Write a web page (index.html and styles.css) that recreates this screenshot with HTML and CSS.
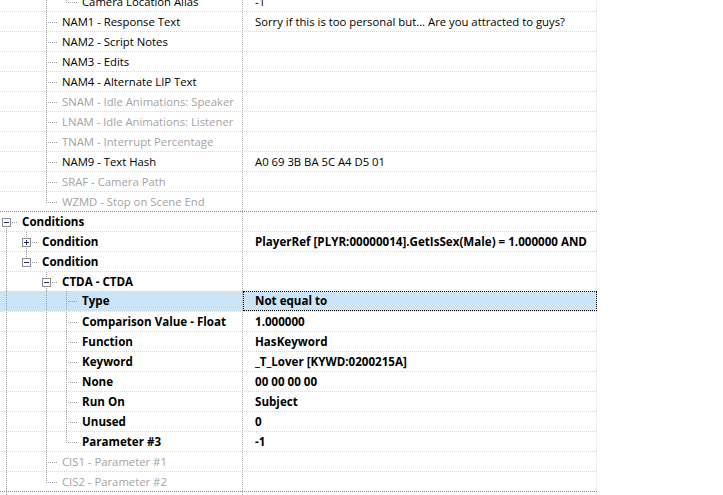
FILE: index.html
```html
<!DOCTYPE html>
<html>
<head>
<meta charset="utf-8">
<link rel="stylesheet" href="styles.css">
</head>
<body>
<div class="tree">
  <div class="row">
    <div class="name"><span class="g"></span><span class="g"></span><span class="g v"></span><span class="own ell"></span><span class="lbl">Camera Location Alias</span></div>
    <div class="val">-1</div>
  </div>
  <div class="row">
    <div class="name"><span class="g"></span><span class="g"></span><span class="own tee"></span><span class="lbl">NAM1 - Response Text</span></div>
    <div class="val">Sorry if this is too personal but... Are you attracted to guys?</div>
  </div>
  <div class="row">
    <div class="name"><span class="g"></span><span class="g"></span><span class="own tee"></span><span class="lbl">NAM2 - Script Notes</span></div>
    <div class="val"></div>
  </div>
  <div class="row">
    <div class="name"><span class="g"></span><span class="g"></span><span class="own tee"></span><span class="lbl">NAM3 - Edits</span></div>
    <div class="val"></div>
  </div>
  <div class="row">
    <div class="name"><span class="g"></span><span class="g"></span><span class="own tee"></span><span class="lbl">NAM4 - Alternate LIP Text</span></div>
    <div class="val"></div>
  </div>
  <div class="row off">
    <div class="name"><span class="g"></span><span class="g"></span><span class="own tee"></span><span class="lbl">SNAM - Idle Animations: Speaker</span></div>
    <div class="val"></div>
  </div>
  <div class="row off">
    <div class="name"><span class="g"></span><span class="g"></span><span class="own tee"></span><span class="lbl">LNAM - Idle Animations: Listener</span></div>
    <div class="val"></div>
  </div>
  <div class="row off">
    <div class="name"><span class="g"></span><span class="g"></span><span class="own tee"></span><span class="lbl">TNAM - Interrupt Percentage</span></div>
    <div class="val"></div>
  </div>
  <div class="row">
    <div class="name"><span class="g"></span><span class="g"></span><span class="own tee"></span><span class="lbl">NAM9 - Text Hash</span></div>
    <div class="val">A0 69 3B BA 5C A4 D5 01</div>
  </div>
  <div class="row off">
    <div class="name"><span class="g"></span><span class="g"></span><span class="own tee"></span><span class="lbl">SRAF - Camera Path</span></div>
    <div class="val"></div>
  </div>
  <div class="row off dark">
    <div class="name"><span class="g"></span><span class="g"></span><span class="own ell"></span><span class="lbl">WZMD - Stop on Scene End</span></div>
    <div class="val"></div>
  </div>

  <div class="row b">
    <div class="name"><span class="own box bot"><svg class="bx" width="9" height="9" viewBox="0 0 9 9"><rect x="0.5" y="0.5" width="8" height="8" fill="#fff" stroke="#8e8e8e"/><path d="M2 4.5H7" stroke="#1d2f6b"/></svg></span><span class="lbl">Conditions</span></div>
    <div class="val"></div>
  </div>
  <div class="row b">
    <div class="name"><span class="g v"></span><span class="own box tee"><svg class="bx" width="9" height="9" viewBox="0 0 9 9"><rect x="0.5" y="0.5" width="8" height="8" fill="#fff" stroke="#8e8e8e"/><path d="M2 4.5H7M4.5 2V7" stroke="#1d2f6b"/></svg></span><span class="lbl">Condition</span></div>
    <div class="val">PlayerRef [PLYR:00000014].GetIsSex(Male) = 1.000000 AND</div>
  </div>
  <div class="row b">
    <div class="name"><span class="g v"></span><span class="own box ell"><svg class="bx" width="9" height="9" viewBox="0 0 9 9"><rect x="0.5" y="0.5" width="8" height="8" fill="#fff" stroke="#8e8e8e"/><path d="M2 4.5H7" stroke="#1d2f6b"/></svg></span><span class="lbl">Condition</span></div>
    <div class="val"></div>
  </div>
  <div class="row b">
    <div class="name"><span class="g v"></span><span class="g"></span><span class="own box tee"><svg class="bx" width="9" height="9" viewBox="0 0 9 9"><rect x="0.5" y="0.5" width="8" height="8" fill="#fff" stroke="#8e8e8e"/><path d="M2 4.5H7" stroke="#1d2f6b"/></svg></span><span class="lbl">CTDA - CTDA</span></div>
    <div class="val"></div>
  </div>
  <div class="row b sel">
    <div class="name"><span class="g v"></span><span class="g"></span><span class="g v"></span><span class="own tee"></span><span class="lbl">Type</span></div>
    <div class="val">Not equal to</div>
  </div>
  <div class="row b">
    <div class="name"><span class="g v"></span><span class="g"></span><span class="g v"></span><span class="own tee"></span><span class="lbl">Comparison Value - Float</span></div>
    <div class="val">1.000000</div>
  </div>
  <div class="row b">
    <div class="name"><span class="g v"></span><span class="g"></span><span class="g v"></span><span class="own tee"></span><span class="lbl">Function</span></div>
    <div class="val">HasKeyword</div>
  </div>
  <div class="row b">
    <div class="name"><span class="g v"></span><span class="g"></span><span class="g v"></span><span class="own tee"></span><span class="lbl">Keyword</span></div>
    <div class="val">_T_Lover [KYWD:0200215A]</div>
  </div>
  <div class="row b">
    <div class="name"><span class="g v"></span><span class="g"></span><span class="g v"></span><span class="own tee"></span><span class="lbl">None</span></div>
    <div class="val">00 00 00 00</div>
  </div>
  <div class="row b">
    <div class="name"><span class="g v"></span><span class="g"></span><span class="g v"></span><span class="own tee"></span><span class="lbl">Run On</span></div>
    <div class="val">Subject</div>
  </div>
  <div class="row b">
    <div class="name"><span class="g v"></span><span class="g"></span><span class="g v"></span><span class="own tee"></span><span class="lbl">Unused</span></div>
    <div class="val">0</div>
  </div>
  <div class="row b">
    <div class="name"><span class="g v"></span><span class="g"></span><span class="g v"></span><span class="own ell"></span><span class="lbl">Parameter #3</span></div>
    <div class="val">-1</div>
  </div>
  <div class="row off">
    <div class="name"><span class="g v"></span><span class="g"></span><span class="own tee"></span><span class="lbl">CIS1 - Parameter #1</span></div>
    <div class="val"></div>
  </div>
  <div class="row off dark">
    <div class="name"><span class="g v"></span><span class="g"></span><span class="own ell"></span><span class="lbl">CIS2 - Parameter #2</span></div>
    <div class="val"></div>
  </div>
  <div class="row">
    <div class="name"><span class="g v"></span></div>
    <div class="val"></div>
  </div>
</div>
</body>
</html>
```

FILE: styles.css
```css
html, body {
  margin: 0;
  padding: 0;
  background: #ffffff;
}

body {
  font-family: "Open Sans", "Noto Sans", "Liberation Sans", sans-serif;
  font-size: 11.3px;
  color: #000;
  overflow: hidden;
}

.tree {
  width: 601px;
  margin-left: -4px;
  margin-top: -8px;
}

.row {
  display: flex;
  height: 20px;
  box-sizing: border-box;
  border-bottom: 1px dotted #d9d9d9;
}

.row.dark {
  border-bottom-color: #8c8c8c;
}

.name {
  flex: none;
  width: 247px;
  box-sizing: border-box;
  display: flex;
  align-items: stretch;
  border-right: 1px dotted #b5b5b5;
  white-space: nowrap;
  overflow: hidden;
}

.val {
  flex: 1;
  display: flex;
  align-items: center;
  padding-left: 12px;
  border-right: 1px dotted #e2e2e2;
  white-space: nowrap;
  overflow: hidden;
}

.lbl {
  display: flex;
  align-items: center;
}

.g {
  flex: none;
  width: 20px;
}

.own {
  flex: none;
  width: 26px;
  background-repeat: no-repeat;
}

.g.v {
  background-image: repeating-linear-gradient(to bottom, #a0a0a0 0 1px, transparent 1px 2px);
  background-size: 1px 100%;
  background-position: 10px 0;
  background-repeat: no-repeat;
}

.own.tee {
  background-image:
    repeating-linear-gradient(to bottom, #a0a0a0 0 1px, transparent 1px 2px),
    repeating-linear-gradient(to right, #a0a0a0 0 1px, transparent 1px 2px);
  background-size: 1px 100%, 12px 1px;
  background-position: 10px 0, 10px 10px;
}

.own.ell {
  background-image:
    repeating-linear-gradient(to bottom, #a0a0a0 0 1px, transparent 1px 2px),
    repeating-linear-gradient(to right, #a0a0a0 0 1px, transparent 1px 2px);
  background-size: 1px 11px, 12px 1px;
  background-position: 10px 0, 10px 10px;
}

.own.bot {
  background-image:
    repeating-linear-gradient(to bottom, #a0a0a0 0 1px, transparent 1px 2px),
    repeating-linear-gradient(to right, #a0a0a0 0 1px, transparent 1px 2px);
  background-size: 1px 100%, 12px 1px;
  background-position: 10px 10px, 10px 10px;
}

.bx {
  display: block;
  margin: 6px 0 0 6px;
}

.off .lbl {
  color: #a4a4a4;
}

.b {
  font-weight: 700;
  font-size: 11.6px;
}

.b .lbl,
.b .val {
  padding-bottom: 1px;
}

.row.sel {
  margin-top: -1px;
  height: 21px;
}

.row.sel .name,
.row.sel .val {
  background-color: #cce4f7;
}

.row.sel .val {
  outline: 1px dotted #000;
  outline-offset: -1px;
}
```
